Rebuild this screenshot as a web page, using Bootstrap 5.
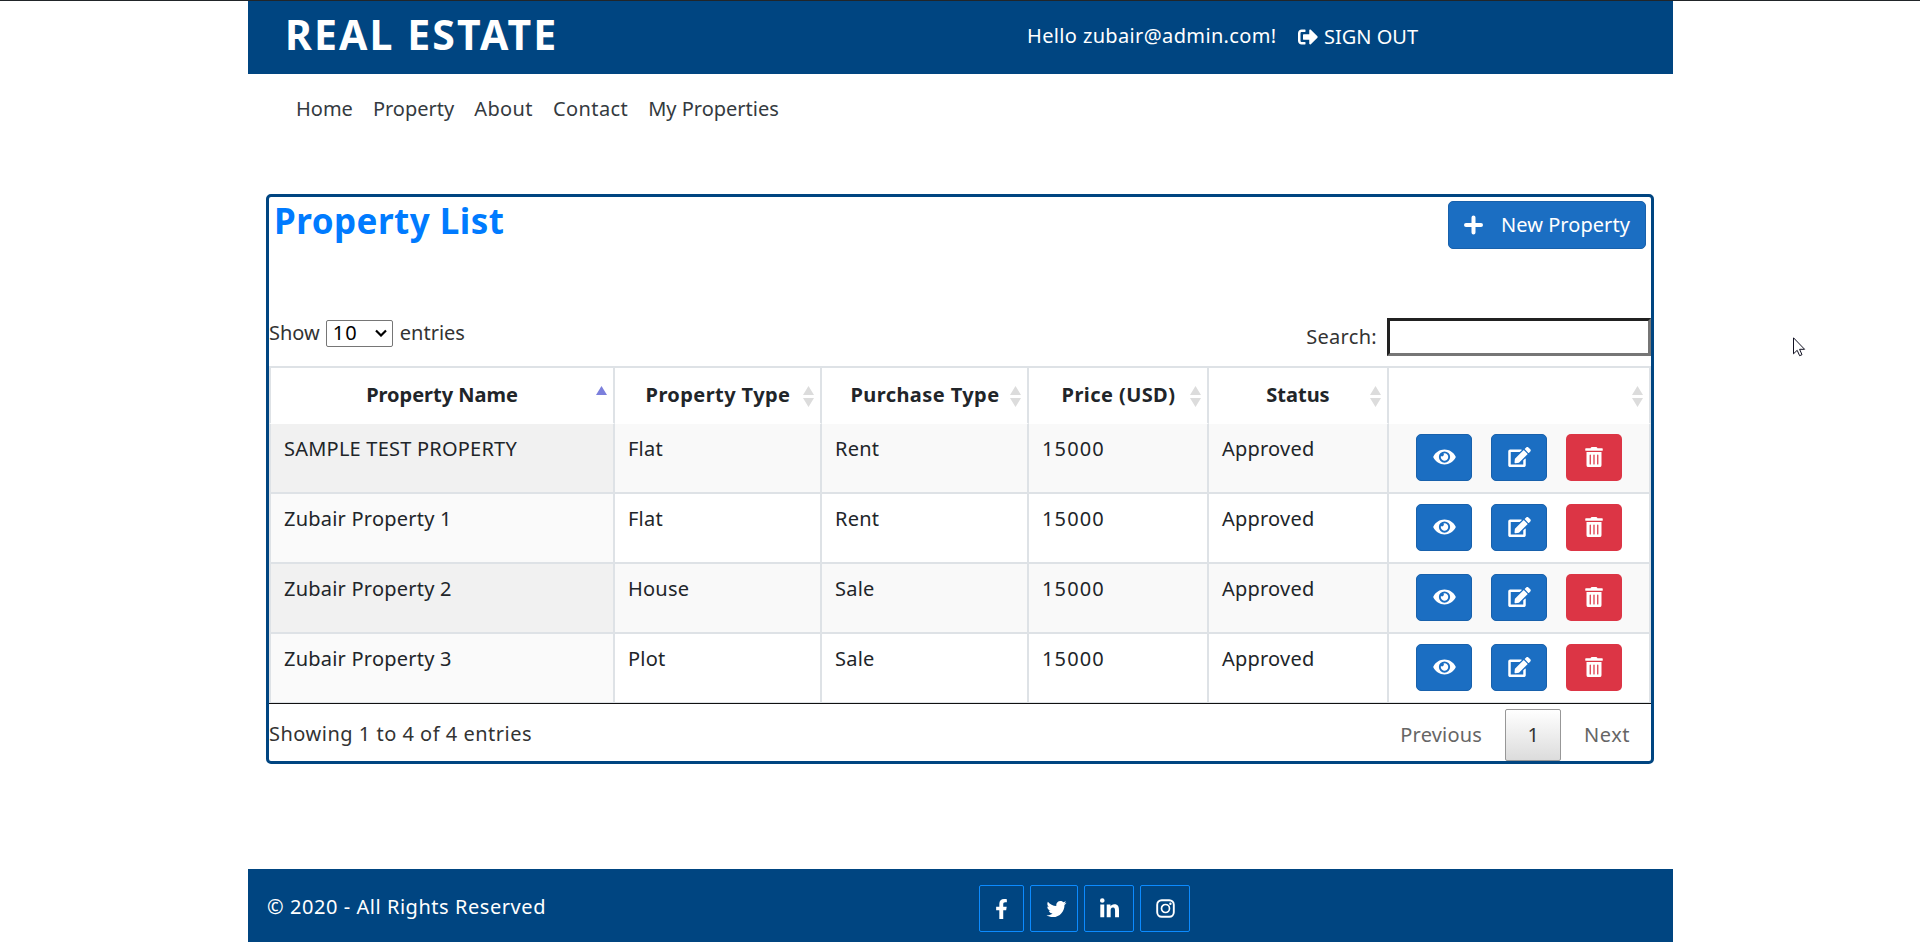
<!DOCTYPE html>
<html lang="en">
<head>
<meta charset="utf-8">
<title>Real Estate</title>
<link href="https://cdn.jsdelivr.net/npm/bootstrap@5.3.0/dist/css/bootstrap.min.css" rel="stylesheet">
<style>
  body{font-family:"Noto Sans","Open Sans",sans-serif;font-size:20px;line-height:30px;color:#212529;border-top:1px solid #212529;height:942px;overflow:hidden;font-weight:400}
  .page{width:1425px;height:941px;margin-left:248px}
  .bar{background:#004581;color:#fff}
  .top{height:73px}
  .brand{font-size:41px;font-weight:700;line-height:48px;padding-left:37px;margin-top:9px;width:779px;letter-spacing:2.1px}
  .hello{margin-top:20px;width:271px;letter-spacing:.36px}
  .signout{margin-top:21px;gap:6px}
  .menu{height:120px;padding:20px 0 0 48px;gap:20px;color:#343a40}
  .wide{letter-spacing:.4px}
  .panel{margin:0 19px 0 18px;height:570px;border:3px solid #004581;border-radius:5px}
  .panel-top{height:121px}
  .panel h2{font-size:35px;line-height:42px;font-weight:700;color:#007bff;margin:3px 0 0 5px;letter-spacing:.48px}
  .btn-main{background:#1b6ec2;border:1px solid #1861ac;color:#fff;border-radius:5px}
  .btn-new{width:198px;height:48px;margin:4px 5px 0 0;padding-left:15px;gap:18px;letter-spacing:.05px}
  .tools{height:48px;color:#333}
  .tools select{width:67px;height:27px;border:1px solid #767676;border-radius:2px;background:#fff;margin:0 7px 0 6px;padding:0;appearance:none;line-height:24px;text-indent:6px;color:#000;letter-spacing:1px}
  .pick{position:relative}
  .pick svg{position:absolute;right:13px;top:9px}
  .search-label{letter-spacing:.3px;margin-right:10px}
  .find{width:264px;height:38px;border:3px solid #767676;border-top-color:#212121;border-left-color:#212121;background:#fff}
  .grid{width:1382px;table-layout:fixed;border-collapse:separate;border-spacing:0;border-bottom:1px solid #111}
  .grid th,.grid td{border-right:2px solid #dee2e6;vertical-align:top}
  .grid th:first-child,.grid td:first-child{border-left:2px solid #dee2e6}
  .grid th{border-top:2px solid #dee2e6;height:58px;padding:12px 12px 0 13px;text-align:center;position:relative;border-bottom:1px solid #fff;letter-spacing:.42px}
  .grid th:first-child,.grid th:nth-child(5){letter-spacing:-.02px;padding-right:13px}
  .grid td{border-bottom:2px solid #dee2e6;height:70px;padding:10px 13px 0;letter-spacing:.22px}
  .grid td:nth-child(4){letter-spacing:1.15px}
  .grid tr:last-child td{border-bottom-width:1px;height:69px}
  .grid tr:nth-child(odd) td{background:#f9f9f9}
  .grid tr:nth-child(odd) td:first-child{background:#f1f1f1}
  .grid tr:nth-child(even) td:first-child{background:#fafafa}
  .sort{position:absolute;right:6px;top:18px}
  .acts{gap:19px;padding:0 0 0 14px}
  .acts .btn{width:56px;height:47px;border-radius:5px;padding:0 0 2px 0}
  .btn-del{background:#dc3545;color:#fff}
  .pages{color:#666;height:57px}
  .info{color:#333;margin-top:15px;letter-spacing:.5px}
  .prev{margin:16px 23px 0 0;letter-spacing:.2px}
  .next{margin:16px 21px 0 23px;letter-spacing:.5px}
  .current{width:56px;height:52px;border:1px solid #979797;border-radius:2px;background:linear-gradient(#fff,#dcdcdc);color:#333;margin-top:5px}
  .foot{height:73px;margin-top:105px;padding-left:19px}
  .legal{margin-top:23px;width:712px;letter-spacing:.55px}
  .soc{border:1px solid #0c8bff;border-radius:2px;height:47px;margin-top:16px}
  .pointer{position:absolute;left:1793px;top:337px}
  .t{display:inline-block;white-space:nowrap}
</style>
</head>
<body>
<svg class="d-none">
  <symbol id="eye" viewBox="0 0 576 512"><path fill="currentColor" d="M572.52 241.4C518.29 135.59 410.93 64 288 64S57.68 135.64 3.48 241.41a32.35 32.35 0 0 0 0 29.19C57.71 376.41 165.07 448 288 448s230.32-71.64 284.52-177.41a32.35 32.35 0 0 0 0-29.19zM288 400a144 144 0 1 1 144-144 143.93 143.93 0 0 1-144 144zm0-240a95.31 95.31 0 0 0-25.31 3.79 47.85 47.85 0 0 1-66.9 66.9A95.78 95.78 0 1 0 288 160z"/></symbol>
  <symbol id="edit" viewBox="0 0 576 512"><path fill="currentColor" d="M402.6 83.2l90.2 90.2c3.8 3.8 3.8 10 0 13.8L274.4 405.6l-92.8 10.3c-12.4 1.4-22.9-9.1-21.5-21.5l10.3-92.8L388.8 83.2c3.8-3.8 10-3.8 13.8 0zm162-22.9l-48.8-48.8c-15.2-15.2-39.9-15.2-55.2 0l-35.4 35.4c-3.8 3.8-3.8 10 0 13.8l90.2 90.2c3.8 3.8 10 3.8 13.8 0l35.4-35.4c15.2-15.3 15.2-40 0-55.2zM384 346.2V448H64V128h229.8c3.2 0 6.2-1.3 8.5-3.5l40-40c7.600-7.600 2.200-20.500-8.500-20.500H48C21.500 64 0 85.500 0 112v352c0 26.500 21.500 48 48 48h352c26.500 0 48-21.500 48-48V306.200c0-10.700-12.900-16-20.500-8.500l-40 40c-2.200 2.300-3.500 5.300-3.500 8.500z"/></symbol>
  <symbol id="trash" viewBox="0 0 448 512"><path fill="currentColor" d="M32 464a48 48 0 0 0 48 48h288a48 48 0 0 0 48-48V128H32zm272-256a16 16 0 0 1 32 0v224a16 16 0 0 1-32 0zm-96 0a16 16 0 0 1 32 0v224a16 16 0 0 1-32 0zm-96 0a16 16 0 0 1 32 0v224a16 16 0 0 1-32 0zM432 32H312l-9.400-18.700A24 24 0 0 0 281.100 0H166.800a23.720 23.720 0 0 0-21.400 13.300L136 32H16A16 16 0 0 0 0 48v32a16 16 0 0 0 16 16h416a16 16 0 0 0 16-16V48a16 16 0 0 0-16-16z"/></symbol>
  <symbol id="both" viewBox="0 0 11 21"><path fill="#dcdcdc" d="M5.500 0L11 9H0zM0 12h11L5.500 21z"/></symbol>
</svg>
<div class="page">
  <header class="bar top d-flex align-items-start">
    <div class="brand"><span class="t">REAL ESTATE</span></div>
    <div class="hello"><span class="t">Hello zubair@admin.com!</span></div>
    <div class="signout d-flex align-items-center"><svg width="20" height="20" viewBox="0 0 512 512"><path fill="#fff" d="M497 273L329 441c-15 15-41 4.500-41-17v-96H152c-13.300 0-24-10.700-24-24v-96c0-13.300 10.700-24 24-24h136V88c0-21.400 25.900-32 41-17l168 168c9.300 9.400 9.300 24.600 0 34zM192 436v-40c0-6.600-5.400-12-12-12H96c-17.700 0-32-14.300-32-32V160c0-17.700 14.300-32 32-32h84c6.600 0 12-5.400 12-12V76c0-6.600-5.400-12-12-12H96c-53 0-96 43-96 96v192c0 53 43 96 96 96h84c6.600 0 12-5.400 12-12z"/></svg><span class="t">SIGN OUT</span></div>
  </header>
  <nav class="menu d-flex"><span class="t">Home</span><span class="t">Property</span><span class="t wide">About</span><span class="t wide">Contact</span><span class="t">My Properties</span></nav>
  <main class="panel">
    <div class="panel-top d-flex justify-content-between align-items-start">
      <h2><span class="t">Property List</span></h2>
      <div class="btn-main btn-new d-flex align-items-center"><svg width="19" height="20" viewBox="0 0 19 20"><path stroke="#fff" stroke-width="4" stroke-linecap="round" d="M9.500 2.500v15M2 10h15"/></svg><span class="t">New Property</span></div>
    </div>
    <div class="tools d-flex justify-content-between align-items-start">
      <div class="d-flex align-items-center"><span class="t">Show</span><span class="pick d-flex"><select><option>10</option></select><svg width="12" height="8" viewBox="0 0 12 8"><path fill="none" stroke="#000" stroke-width="2.200" d="M1 1.500l5 5 5-5"/></svg></span><span class="t">entries</span></div>
      <div class="d-flex align-items-center"><span class="t search-label">Search:</span><div class="find"></div></div>
    </div>
    <table class="grid">
      <colgroup><col style="width:346px"><col style="width:207px"><col style="width:207px"><col style="width:180px"><col style="width:180px"><col style="width:262px"></colgroup>
      <thead><tr>
        <th><span class="t">Property Name</span><svg class="sort" width="11" height="21" viewBox="0 0 11 21"><path fill="#7b7fdc" d="M5.500 0L11 9H0z"/></svg></th>
        <th><span class="t">Property Type</span><svg class="sort" width="11" height="21"><use href="#both"/></svg></th>
        <th><span class="t">Purchase Type</span><svg class="sort" width="11" height="21"><use href="#both"/></svg></th>
        <th><span class="t">Price (USD)</span><svg class="sort" width="11" height="21"><use href="#both"/></svg></th>
        <th><span class="t">Status</span><svg class="sort" width="11" height="21"><use href="#both"/></svg></th>
        <th><svg class="sort" width="11" height="21"><use href="#both"/></svg></th>
      </tr></thead>
      <tbody id="rows"></tbody>
    </table>
    <div class="pages d-flex align-items-start">
      <span class="t me-auto info">Showing 1 to 4 of 4 entries</span>
      <span class="t prev">Previous</span>
      <span class="current d-flex align-items-center justify-content-center">1</span>
      <span class="t next">Next</span>
    </div>
  </main>
  <footer class="bar foot d-flex align-items-start">
    <span class="t legal">© 2020 - All Rights Reserved</span>
    <span class="soc d-flex align-items-center justify-content-center" style="width:45px;margin-right:6px"><svg width="13" height="20" viewBox="0 0 320 512"><path fill="#fff" d="M279.140 288l14.220-92.660h-88.910v-60.130c0-25.350 12.420-50.060 52.240-50.060h40.420V6.260S260.430 0 225.360 0c-73.220 0-121.080 44.380-121.080 124.720v70.620H22.890V288h81.390v224h100.170V288z"/></svg></span>
    <span class="soc d-flex align-items-center justify-content-center" style="width:48px;margin-right:6px;padding-left:4px"><svg width="21" height="20" viewBox="0 0 512 512"><path fill="#fff" d="M459.370 151.716c.325 4.548.325 9.097.325 13.645 0 138.720-105.583 298.558-298.558 298.558-59.452 0-114.680-17.219-161.137-47.106 8.447.974 16.568 1.299 25.340 1.299 49.055 0 94.213-16.568 130.274-44.832-46.132-.975-84.792-31.188-98.112-72.772 6.498.974 12.995 1.624 19.818 1.624 9.421 0 18.843-1.300 27.614-3.573-48.081-9.747-84.143-51.980-84.143-102.985v-1.299c13.969 7.797 30.214 12.670 47.431 13.319-28.264-18.843-46.781-51.005-46.781-87.391 0-19.492 5.197-37.360 14.294-52.954 51.655 63.675 129.300 105.258 216.365 109.807-1.624-7.797-2.599-15.918-2.599-24.040 0-57.828 46.782-104.934 104.934-104.934 30.213 0 57.502 12.670 76.670 33.137 23.715-4.548 46.456-13.320 66.599-25.340-7.798 24.366-24.366 44.833-46.132 57.827 21.117-2.273 41.584-8.122 60.426-16.243-14.292 20.791-32.161 39.308-52.628 54.253z"/></svg></span>
    <span class="soc d-flex align-items-center justify-content-center" style="width:50px;margin-right:6px"><svg width="19" height="22" viewBox="0 0 448 512"><path fill="#fff" d="M100.280 448H7.400V148.900h92.880zM53.790 108.100C24.090 108.100 0 83.500 0 53.800a53.790 53.790 0 0 1 107.580 0c0 29.700-24.100 54.300-53.790 54.300zM447.900 448h-92.680V302.400c0-34.700-.7-79.200-48.290-79.200-48.290 0-55.690 37.700-55.690 76.700V448h-92.780V148.900h89.080v40.800h1.300c12.400-23.500 42.690-48.300 87.880-48.300 94 0 111.280 61.900 111.280 142.300V448z"/></svg></span>
    <span class="soc d-flex align-items-center justify-content-center" style="width:50px"><svg width="19" height="19" viewBox="0 0 19 19"><rect x="1.200" y="1.200" width="16.600" height="16.600" rx="4.500" fill="none" stroke="#fff" stroke-width="1.900"/><circle cx="9.500" cy="9.500" r="4" fill="none" stroke="#fff" stroke-width="1.700"/><circle cx="14.400" cy="4.700" r="1.200" fill="#fff"/></svg></span>
  </footer>
</div>
<svg class="pointer" width="13" height="20" viewBox="0 0 13 20"><path fill="#fff" stroke="#112" d="M.5.8v16l3.700-3.500 2.400 5.400 2.400-1-2.400-5.400h5z"/></svg>
<script src="https://cdn.jsdelivr.net/npm/bootstrap@5.3.0/dist/js/bootstrap.bundle.min.js"></script>
<script>
  const data=[['SAMPLE TEST PROPERTY','Flat','Rent'],['Zubair Property 1','Flat','Rent'],['Zubair Property 2','House','Sale'],['Zubair Property 3','Plot','Sale']];
  const icon=(n,w)=>`<svg width="${w}" height="20"><use href="#${n}"/></svg>`;
  const btn=(c,n,w)=>`<span class="btn ${c} d-flex align-items-center justify-content-center">${icon(n,w)}</span>`;
  document.getElementById('rows').innerHTML=data.map(r=>'<tr>'+[...r,'15000','Approved'].map(v=>`<td><span class="t">${v}</span></td>`).join('')+
    `<td><div class="acts d-flex">${btn('btn-main','eye',23)}${btn('btn-main','edit',23)}${btn('btn-del','trash',18)}</div></td></tr>`).join('');
</script>
</body>
</html>
